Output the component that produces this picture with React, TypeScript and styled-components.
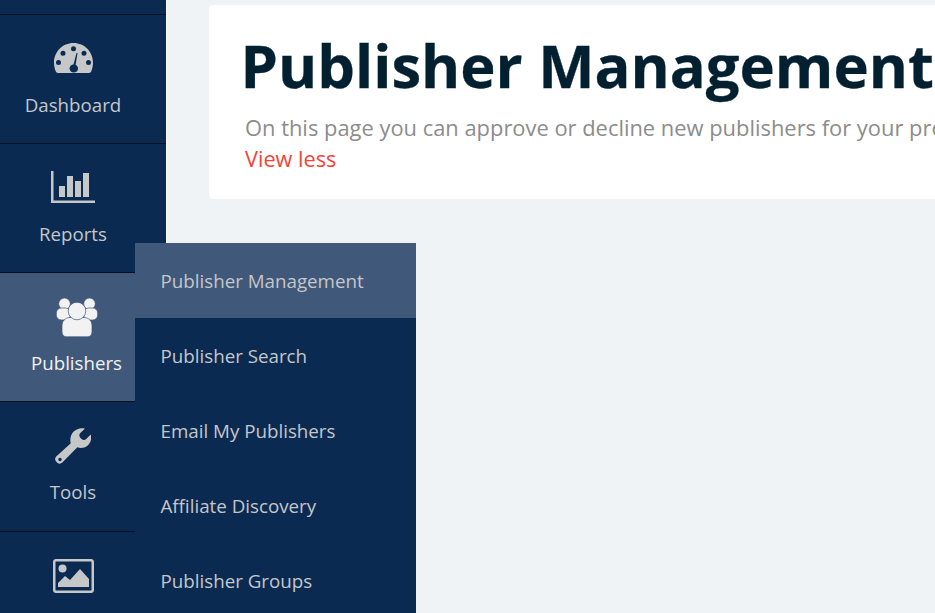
import React from 'react';
import styled, { createGlobalStyle } from 'styled-components';

const GlobalStyle = createGlobalStyle`
  html, body {
    margin: 0;
    height: 100%;
    overflow: hidden;
    background: #eff3f6;
    font-family: "Open Sans", "Liberation Sans", sans-serif;
  }
`;

const GaugeIcon = () => (
  <svg width="39" height="31" viewBox="0 0 39 31">
    <path
      fillRule="evenodd"
      fill="currentColor"
      d="M19.500 0C8.500 0 0 8.800 0 19.500c0 3.200.6 6.100 1.700 8.800.4 1 1.200 1.700 2.300 1.700h31c1.100 0 1.900-.7 2.300-1.700 1.100-2.700 1.700-5.600 1.700-8.800C39 8.800 30.500 0 19.500 0zM19.500 3.200a2.500 2.500 0 1 1 0 5 2.500 2.500 0 0 1 0-5zM9 7.800a2.500 2.500 0 1 1 0 5 2.500 2.500 0 0 1 0-5zm21 0a2.500 2.500 0 1 1 0 5 2.500 2.500 0 0 1 0-5zM4.500 17a2.500 2.500 0 1 1 0 5 2.500 2.500 0 0 1 0-5zm30 0a2.500 2.500 0 1 1 0 5 2.500 2.500 0 0 1 0-5zM22.500 10l1 .3-1.900 11.400c1.500.8 2.400 2.200 2.400 3.800 0 2.400-2 4-4.300 4s-4.200-1.700-4.200-4c0-2.300 1.800-4 4-4.100z"
    />
  </svg>
);

const ChartIcon = () => (
  <svg width="44" height="33" viewBox="0 0 44 33">
    <g fill="currentColor">
      <rect x="0" y="0" width="2.500" height="32" />
      <rect x="0" y="29.500" width="44" height="2.500" />
      <rect x="8" y="15" width="6" height="11" />
      <rect x="16" y="5" width="6" height="21" />
      <rect x="24" y="10" width="6" height="16" />
      <rect x="32" y="2" width="6" height="24" />
    </g>
  </svg>
);

const UsersIcon = () => (
  <svg width="42" height="39" viewBox="0 0 42 39">
    <g fill="currentColor" stroke="#40587a" strokeWidth="0.700">
      <circle cx="8.500" cy="5.800" r="5.800" />
      <circle cx="33.500" cy="5.800" r="5.800" />
      <rect x="0.300" y="10" width="14" height="12" rx="5" />
      <rect x="27.700" y="10" width="14" height="12" rx="5" />
      <path d="M6 28c0-5 3-8 7.500-8.500h15C33 20 36 23 36 28v6c0 3-2 4.800-4.500 4.800h-21C8 38.800 6 37 6 34z" />
      <circle cx="21" cy="13" r="8.800" />
    </g>
  </svg>
);

const WrenchIcon = () => (
  <svg width="36" height="36" viewBox="0 0 36 36">
    <path
      fillRule="evenodd"
      fill="currentColor"
      d="M27 .3c1 0 2 .1 2.800.4l-4.500 4.300c-1.300 1.300-1.300 3.400 0 4.700l1.300 1.300c1.300 1.300 3.300 1.300 4.600 0l4.500-4.400c.3.900.5 2 .5 3 0 5.800-4.700 10.300-10.300 10.300-1.300 0-2.400-.2-3.500-.6L7.300 34.600c-1.500 1.500-3.700 1.400-5 .1L1.100 33.500c-1.400-1.400-1.300-3.600.1-5l14.600-13.200c-.3-1-.5-2-.5-3.100C15.300 5.200 20.500.3 27 .3zM5 29.800a1.700 1.700 0 1 0 0 3.400 1.700 1.700 0 0 0 0-3.400z"
    />
  </svg>
);

const ImageIcon = () => (
  <svg width="41" height="34" viewBox="0 0 41 34">
    <path
      fillRule="evenodd"
      fill="currentColor"
      d="M3 0h35c1.700 0 3 1.300 3 3v28c0 1.700-1.300 3-3 3H3c-1.700 0-3-1.300-3-3V3c0-1.700 1.300-3 3-3zm0 2.500c-.3 0-.5.200-.5.500v28c0 .3.200.5.500.5h35c.3 0 .5-.2.500-.5V3c0-.3-.2-.5-.5-.5z"
    />
    <circle cx="9.500" cy="9.500" r="4" fill="currentColor" />
    <path fill="currentColor" d="M5 28v-4l7-7 5 4 10-11 9 10v8z" />
  </svg>
);

const Page = styled.div`
  display: flex;
  height: 613px;
  width: 935px;
  overflow: hidden;
  position: relative;
`;

const Sidebar = styled.nav`
  width: 166px;
  flex: none;
  background: #0b2a52;
  border-right: 1px solid #fbfcfd;
  display: flex;
  flex-direction: column;
  overflow: hidden;
`;

const TopStub = styled.div`
  height: 13.500px;
  flex: none;
  border-bottom: 1px solid #04101f;
`;

const NavItem = styled.a<{ $active?: boolean }>`
  flex: none;
  height: 128.250px;
  border-bottom: 1px solid #04101f;
  box-sizing: content-box;
  display: flex;
  flex-direction: column;
  align-items: center;
  gap: 5px;
  padding-right: ${({ $active }) => ($active ? '13px' : '20px')};
  color: ${({ $active }) => ($active ? '#f2f2f2' : '#c5c7c9')};
  background: ${({ $active }) => ($active ? '#40587a' : 'transparent')};
  font-size: 18.700px;
  line-height: 26px;
`;

const IconSlot = styled.div`
  height: 56px;
  margin-top: 16px;
  display: flex;
  align-items: center;
  justify-content: center;
`;

const Main = styled.main`
  flex: 1;
  min-width: 0;
  padding: 5px 0 0 42px;
`;

const Card = styled.section`
  background: #ffffff;
  border-radius: 4px 0 0 4px;
  height: 194px;
  padding: 24px 0 0 34px;
  box-sizing: border-box;
  white-space: nowrap;
  overflow: hidden;
`;

const Title = styled.h1`
  margin: 0 0 0 -2.500px;
  font-size: 59.700px;
  line-height: 72px;
  font-weight: 700;
  color: #02202f;
  -webkit-text-stroke: 0.300px #02202f;
`;

const Intro = styled.p`
  margin: 12px 0 0 2px;
  font-size: 21.900px;
  line-height: 30px;
  color: #8c8c8c;
`;

const ViewLess = styled.a`
  display: block;
  margin: 1px 0 0 2px;
  font-size: 21.700px;
  line-height: 30px;
  color: #f44336;
`;

const Flyout = styled.ul`
  position: absolute;
  left: 135px;
  top: 243px;
  width: 281px;
  margin: 0;
  padding: 0;
  list-style: none;
  background: #0b2a52;
`;

const FlyoutItem = styled.li<{ $active?: boolean }>`
  height: 75px;
  display: flex;
  align-items: center;
  padding-left: 25.500px;
  font-size: 18.750px;
  color: #c5c7c9;
  background: ${({ $active }) => ($active ? '#40587a' : 'transparent')};
`;

const navItems = [
  { label: 'Dashboard', icon: <GaugeIcon /> },
  { label: 'Reports', icon: <ChartIcon /> },
  { label: 'Publishers', icon: <UsersIcon />, active: true },
  { label: 'Tools', icon: <WrenchIcon /> },
  { label: '', icon: <ImageIcon /> },
];

const flyoutItems = [
  'Publisher Management',
  'Publisher Search',
  'Email My Publishers',
  'Affiliate Discovery',
  'Publisher Groups',
];

export default function App() {
  return (
    <Page>
      <GlobalStyle />
      <Sidebar>
        <TopStub />
        {navItems.map((item, i) => (
          <NavItem key={i} $active={item.active}>
            <IconSlot>{item.icon}</IconSlot>
            {item.label && <span>{item.label}</span>}
          </NavItem>
        ))}
      </Sidebar>
      <Main>
        <Card>
          <Title>Publisher Management</Title>
          <Intro>On this page you can approve or decline new publishers for your program.</Intro>
          <ViewLess>View less</ViewLess>
        </Card>
      </Main>
      <Flyout>
        {flyoutItems.map((label, i) => (
          <FlyoutItem key={label} $active={i === 0}>
            {label}
          </FlyoutItem>
        ))}
      </Flyout>
    </Page>
  );
}
